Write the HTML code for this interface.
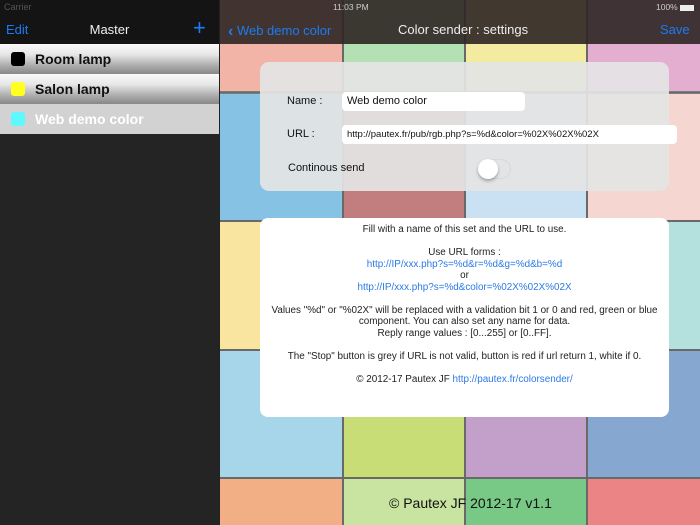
<!DOCTYPE html>
<html><head><meta charset="utf-8"><style>
*{margin:0;padding:0;box-sizing:border-box}
body{width:700px;height:525px;overflow:hidden;position:relative;font-family:"Liberation Sans",sans-serif;background:#222}
.side{position:absolute;left:0;top:0;width:219px;height:525px;background:#242424}
.sbar{position:absolute;left:0;top:0;width:219px;height:44px;background:#141414}
.row{position:absolute;left:0;width:219px;height:30px;background:linear-gradient(#fafafa 0%,#e6e6e6 35%,#a8a8a8 75%,#888 100%);font-weight:bold;font-size:14px;line-height:30px;padding-left:35px;color:#111}
.sw{position:absolute;left:11px;top:8px;width:14px;height:14px;border-radius:3px}
.main{position:absolute;left:220px;top:0;width:480px;height:525px;overflow:hidden;background:#fff}
.t{position:absolute;border:2px solid #666;opacity:.85}
.nav{position:absolute;left:220px;top:0;width:480px;height:44px;background:rgba(45,38,35,.9)}
.blue{color:#1a7cf5}
.p1{position:absolute;left:260px;top:62px;width:409px;height:129px;background:rgba(228,228,228,.93);border-radius:9px}
.p2{position:absolute;left:260px;top:218px;width:409px;height:199px;background:#fff;border-radius:8px;font-size:9.9px;text-align:center;color:#222;line-height:11.5px;padding-top:6px}
.p2 a{color:#2a7ae8;text-decoration:none}
.in{position:absolute;background:#fff;border-radius:4px;font-size:11px;padding-left:5px;color:#111}
</style></head><body>
<div class="main">
<div class="t" style="left:-4px;top:-4px;width:128px;height:97px;background:#f0a898"></div>
<div class="t" style="left:122px;top:-4px;width:124px;height:97px;background:#a8dca8"></div>
<div class="t" style="left:244px;top:-4px;width:124px;height:97px;background:#f0e890"></div>
<div class="t" style="left:366px;top:-4px;width:120px;height:97px;background:#e0a0c8"></div>
<div class="t" style="left:-4px;top:92px;width:128px;height:130px;background:#70b8e0"></div>
<div class="t" style="left:122px;top:92px;width:124px;height:130px;background:#b86868"></div>
<div class="t" style="left:244px;top:92px;width:124px;height:130px;background:#c0dcf0"></div>
<div class="t" style="left:366px;top:92px;width:120px;height:130px;background:#f4d0c8"></div>
<div class="t" style="left:-4px;top:220px;width:128px;height:131px;background:#f8e090"></div>
<div class="t" style="left:122px;top:220px;width:124px;height:131px;background:#e8d0a0"></div>
<div class="t" style="left:244px;top:220px;width:124px;height:131px;background:#d0d0e0"></div>
<div class="t" style="left:366px;top:220px;width:120px;height:131px;background:#a8dcd8"></div>
<div class="t" style="left:-4px;top:349px;width:128px;height:130px;background:#98d0e8"></div>
<div class="t" style="left:122px;top:349px;width:124px;height:130px;background:#c0d860"></div>
<div class="t" style="left:244px;top:349px;width:124px;height:130px;background:#b890c0"></div>
<div class="t" style="left:366px;top:349px;width:120px;height:130px;background:#7098c8"></div>
<div class="t" style="left:-4px;top:477px;width:128px;height:60px;background:#f0a070"></div>
<div class="t" style="left:122px;top:477px;width:124px;height:60px;background:#c0e090"></div>
<div class="t" style="left:244px;top:477px;width:124px;height:60px;background:#60c070"></div>
<div class="t" style="left:366px;top:477px;width:120px;height:60px;background:#e87070"></div>
</div>
<div class="side">
<div class="sbar"></div>
<div style="position:absolute;left:4px;top:2px;font-size:9px;color:#555">Carrier</div>
<div class="blue" style="position:absolute;left:6px;top:22px;font-size:13px">Edit</div>
<div style="position:absolute;left:0;width:219px;top:22px;font-size:13px;color:#eee;text-align:center">Master</div>
<div class="blue" style="position:absolute;left:193px;top:15px;font-size:22px;font-weight:300">+</div>
<div class="row" style="top:44px"><div class="sw" style="background:#000"></div>Room lamp</div>
<div class="row" style="top:74px"><div class="sw" style="background:#ffff20"></div>Salon lamp</div>
<div class="row" style="top:104px;background:#d2d2d2;color:#fff"><div class="sw" style="background:#5ff8ff"></div>Web demo color</div>
</div>
<div class="nav"></div>
<div style="position:absolute;left:333px;top:2px;font-size:8.5px;color:#ccc">11:03 PM</div>
<div style="position:absolute;left:656px;top:2px;font-size:8.5px;color:#ccc">100% <span style="display:inline-block;width:14px;height:6px;background:#eee;vertical-align:middle"></span></div>
<div class="blue" style="position:absolute;left:228px;top:22px;font-size:13px"><span style="font-size:16px;font-weight:bold;position:relative;top:1px">&#8249;</span> Web demo color</div>
<div style="position:absolute;left:398px;top:22px;font-size:13px;color:#eee">Color sender : settings</div>
<div class="blue" style="position:absolute;left:660px;top:22px;font-size:13px">Save</div>
<div class="p1"></div>
<div style="position:absolute;left:287px;top:95px;font-size:11px;color:#111">Name :</div>
<div class="in" style="left:342px;top:92px;width:183px;height:19px;line-height:19px">Web demo color</div>
<div style="position:absolute;left:287px;top:128px;font-size:11px;color:#111">URL :</div>
<div class="in" style="left:342px;top:125px;width:335px;height:19px;line-height:19px;font-size:9.5px">http://pautex.fr/pub/rgb.php?s=%d&amp;color=%02X%02X%02X</div>
<div style="position:absolute;left:288px;top:162px;font-size:11px;color:#111">Continous send</div>
<div style="position:absolute;left:478px;top:159px;width:33px;height:20px;border-radius:10px;border:1px solid #d8d8d8"></div>
<div style="position:absolute;left:478px;top:159px;width:20px;height:20px;border-radius:50%;background:#fff;box-shadow:0 2px 3px rgba(0,0,0,.3)"></div>
<div class="p2">Fill with a name of this set and the URL to use.<br><br>Use URL forms :<br><a>http://IP/xxx.php?s=%d&amp;r=%d&amp;g=%d&amp;b=%d</a><br>or<br><a>http://IP/xxx.php?s=%d&amp;color=%02X%02X%02X</a><br><br>Values "%d" or "%02X" will be replaced with a validation bit 1 or 0 and red, green or blue<br>component. You can also set any name for data.<br>Reply range values : [0...255] or [0..FF].<br><br>The "Stop" button is grey if URL is not valid, button is red if url return 1, white if 0.<br><br>© 2012-17 Pautex JF <a>http://pautex.fr/colorsender/</a></div>
<div style="position:absolute;left:389px;top:495px;font-size:14px;color:#111">© Pautex JF 2012-17 v1.1</div>
</body></html>
